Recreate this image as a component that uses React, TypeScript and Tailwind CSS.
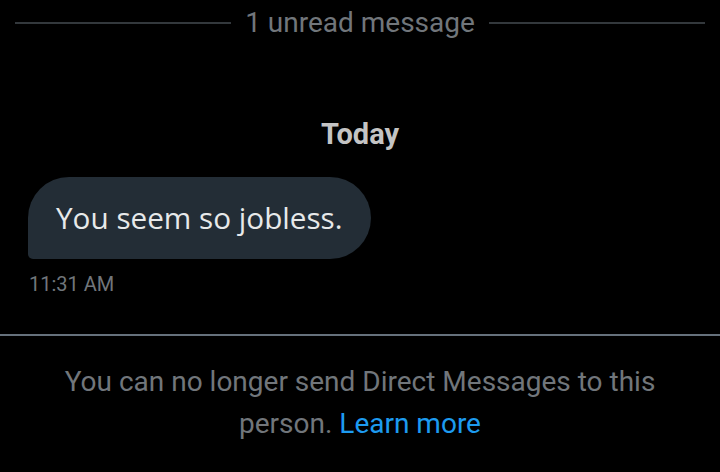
export default function App() {
  return (
    <div className="w-[720px] h-[472px] bg-black overflow-hidden flex flex-col" style={{ fontFamily: 'Roboto, "Liberation Sans", sans-serif' }}>
      <div className="h-[46px] flex items-center px-[15px] gap-[14px]">
        <div className="flex-1 h-[2px] bg-[#33383c]" />
        <span className="text-[28px] text-[#71767b] leading-none">1 unread message</span>
        <div className="flex-1 h-[2px] bg-[#33383c]" />
      </div>
      <div className="h-[66px]" />
      <div className="h-[44px] flex items-center justify-center">
        <span className="text-[29px] font-bold text-[#c4c4c4] leading-none">Today</span>
      </div>
      <div className="h-[21px]" />
      <div className="px-[28px]">
        <div className="inline-flex items-center h-[82px] pl-[28px] pr-[28px] bg-[#232d36] rounded-[41px] rounded-bl-[5px]">
          <span className="text-[29.7px] text-[#e7e9ea] leading-none" style={{ fontFamily: '"Open Sans", sans-serif' }}>You seem so jobless.</span>
        </div>
      </div>
      <div className="px-[29px] h-[50px] flex items-center">
        <span className="text-[20px] text-[#71767b] leading-none">11:31 AM</span>
      </div>
      <div className="h-[25px]" />
      <div className="h-[2px] bg-[#66717c]" />
      <div className="pt-[25px] px-[60px] text-center text-[28px] leading-[42px] text-[#71767b]">
        You can no longer send Direct Messages to this person. <span className="text-[#1d9bf0]">Learn more</span>
      </div>
    </div>
  );
}
